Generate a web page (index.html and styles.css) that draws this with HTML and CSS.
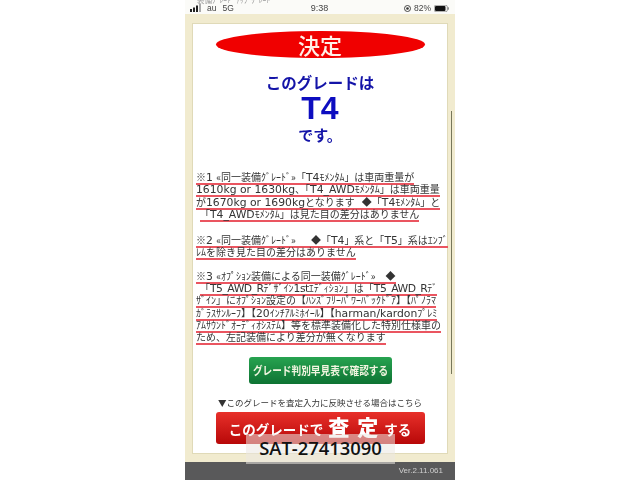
FILE: index.html
```html
<!DOCTYPE html>
<html lang="ja">
<head>
<meta charset="utf-8">
<title>決定</title>
<link rel="stylesheet" href="styles.css">
</head>
<body>
<div class="phone">
  <div class="screen">
    <div class="status">
      <div class="ghost">装備ｸﾞﾚｰﾄﾞ ｱｯﾌﾟｸﾞﾚｰﾄﾞ</div>
      <div class="st-left">
        <svg class="signal" width="11" height="8" viewBox="0 0 11 8"><rect x="0" y="5" width="2" height="3" fill="#222"/><rect x="3" y="3.5" width="2" height="4.500" fill="#222"/><rect x="6" y="1.500" width="2" height="6.500" fill="#222"/><rect x="9" y="0" width="2" height="8" fill="#aaa"/></svg>
        <span>au</span><span>5G</span>
      </div>
      <div class="st-mid">9:38</div>
      <div class="st-right">
        <svg width="7" height="7" viewBox="0 0 7 7"><circle cx="3.500" cy="3.500" r="3" fill="none" stroke="#333" stroke-width="0.900"/><circle cx="3.500" cy="3.500" r="1.300" fill="#333"/></svg>
        <span>82%</span>
        <svg width="15" height="7" viewBox="0 0 15 7"><rect x="0.300" y="0.300" width="13" height="6.400" rx="1.500" fill="none" stroke="#666" stroke-width="0.600"/><rect x="1" y="1" width="10.500" height="5" rx="1" fill="#111"/><rect x="13.700" y="2.300" width="1" height="2.400" fill="#666"/></svg>
      </div>
    </div>
    <main class="card">
      <div class="decide">決定</div>
      <div class="result">
        <div class="r1">このグレードは</div>
        <div class="r2">T4</div>
        <div class="r3">です。</div>
      </div>
      <section class="note first">
        <div><span class="ln">※<i>1 </i>«同一装備ｸﾞﾚｰﾄﾞ»「<i>T4</i>ﾓﾒﾝﾀﾑ」は車両重量が</span></div>
        <div><span class="ln"><i>1610kg or 1630kg</i>、「<i>T4_AWD</i>ﾓﾒﾝﾀﾑ」は車両重量</span></div>
        <div><span class="ln">が<i>1670kg or 1690kg</i>となります&ensp;&thinsp;◆「<i>T4</i>ﾓﾒﾝﾀﾑ」と</span></div>
        <div class="ind"><span class="ln">「<i>T4_AWD</i>ﾓﾒﾝﾀﾑ」は見た目の差分はありません</span></div>
      </section>
      <section class="note">
        <div><span class="ln">※<i>2 </i>«同一装備ｸﾞﾚｰﾄﾞ»　&ensp;◆「<i>T4</i>」系と「<i>T5</i>」系はｴﾝﾌﾞ</span></div>
        <div><span class="ln">ﾚﾑを除き見た目の差分はありません</span></div>
      </section>
      <section class="note">
        <div><span class="ln">※<i>3 </i>«ｵﾌﾟｼｮﾝ装備による同一装備ｸﾞﾚｰﾄﾞ»　◆</span></div>
        <div class="ind"><span class="ln">「<i class="tight">T5_AWD_R</i>ﾃﾞｻﾞｲﾝ<i class="tight">1st</i>ｴﾃﾞｨｼｮﾝ」は「<i class="tight">T5_AWD_R</i>ﾃﾞ</span></div>
        <div><span class="ln">ｻﾞｲﾝ」にｵﾌﾟｼｮﾝ設定の【ﾊﾝｽﾞﾌﾘｰﾊﾟﾜｰﾊﾞｯｸﾄﾞｱ】【ﾊﾟﾉﾗﾏ</span></div>
        <div><span class="ln">ｶﾞﾗｽｻﾝﾙｰﾌ】【<i>20</i>ｲﾝﾁｱﾙﾐﾎｲｰﾙ】【<i>harman/kardon</i>ﾌﾟﾚﾐ</span></div>
        <div><span class="ln">ｱﾑｻｳﾝﾄﾞｵｰﾃﾞｨｵｼｽﾃﾑ】等を標準装備化した特別仕様車の</span></div>
        <div><span class="ln">ため、左記装備により差分が無くなります</span></div>
      </section>
      <div class="green"><span>グレード判別早見表で確認する</span></div>
      <div class="hint">▼このグレードを査定入力に反映させる場合はこちら</div>
      <div class="red">このグレードで<b>査定</b>する</div>
    </main>
    <footer class="foot">Ver.2.11.061</footer>
    <div class="scroll"></div>
  </div>
  <div class="stamp">SAT-27413090</div>
</div>
</body>
</html>
```
FILE: styles.css
```css
* { box-sizing: border-box; }
html, body { margin: 0; padding: 0; background: #fff; width: 640px; height: 480px; overflow: hidden; }
body { font-family: "Noto Sans CJK JP", sans-serif; }
.phone { position: relative; width: 270px; height: 480px; margin-left: 185px; overflow: hidden; }
.screen { position: relative; height: 480px; background: #f1ebcf; display: flex; flex-direction: column; overflow: hidden; filter: blur(0.35px); }
.status { position: relative; height: 14px; padding: 2px 6px 0 5px; background: #fbfbf8; display: grid; grid-template-columns: 1fr auto 1fr; align-items: center; font: 8.500px "Liberation Sans", sans-serif; color: #444; flex: none; }
.ghost { position: absolute; left: 12px; top: -6px; font: 7.500px "Noto Sans CJK JP", sans-serif; color: #999; }
.st-left { display: flex; align-items: center; gap: 6px; }
.st-mid { font-size: 9px; }
.st-right { display: flex; align-items: center; justify-content: flex-end; gap: 3px; }
.card { margin: 9px 7px 0; width: 256px; height: 431px; background: #fff; border: 1px solid #e0dab8; display: flex; flex-direction: column; align-items: center; flex: none; }
.decide { width: 209px; height: 27px; margin-top: 7px; border-radius: 50%; background: #f00000; color: #fff0e8; font: 500 22px/26px "Noto Sans CJK JP", sans-serif; text-align: center; flex: none; }
.result { margin-top: 14px; text-align: center; color: #1414a8; font-weight: 700; }
.r1 { font-size: 15.500px; line-height: 20px; }
.r2 { font: 700 32px/33px "Liberation Sans", sans-serif; color: #0d0dc0; }
.r3 { font-size: 15px; line-height: 20px; }
.note { align-self: stretch; padding-left: 3px; margin-bottom: 11px; font-size: 10px; color: #333; white-space: nowrap; }
.note.first { margin-top: 26px; margin-bottom: 14px; }
.note div { height: 12.300px; line-height: 12px; }
.note .ind { padding-left: 4px; }
.note i { font: 10.800px "DejaVu Sans", sans-serif; }
.note i.tight { letter-spacing: -0.5px; }
.ln { display: inline-block; height: 14px; border-bottom: 2px solid #ea5560; }
.green { width: 143px; height: 27px; margin-top: 2px; border-radius: 3px; background: linear-gradient(#27a350, #0e7333); color: #f2f5e0; font: 700 11.500px/27px "Noto Sans CJK JP", sans-serif; display: flex; justify-content: center; flex: none; white-space: nowrap; }
.green span { display: block; transform: scaleX(0.84); }
.hint { margin-top: 12px; height: 12px; font: 400 8.500px/12px "Noto Sans CJK JP", sans-serif; color: #333; }
.red { width: 209px; height: 32px; margin-top: 4px; border-radius: 3px; background: linear-gradient(#e8302a, #b80808); color: #fff; font: 700 13.500px/29px "Noto Sans CJK JP", sans-serif; text-align: center; flex: none; white-space: nowrap; }
.red b { font-size: 21px; font-weight: 900; margin: 0 -2px 0 5px; letter-spacing: 8px; }
.foot { margin-top: 8px; flex: 1; background: #59595a; color: #cfcfcf; font: 8px/18px "Liberation Sans", sans-serif; text-align: right; padding-right: 12px; }
.scroll { position: absolute; right: 3px; top: 111px; width: 1.500px; height: 263px; background: #77775a; }
.stamp { position: absolute; left: 61px; top: 434px; width: 149px; height: 30px; background: rgba(235, 232, 225, 0.55); color: #111; font: 600 18.400px/28px "Open Sans", sans-serif; text-align: center; }
```
